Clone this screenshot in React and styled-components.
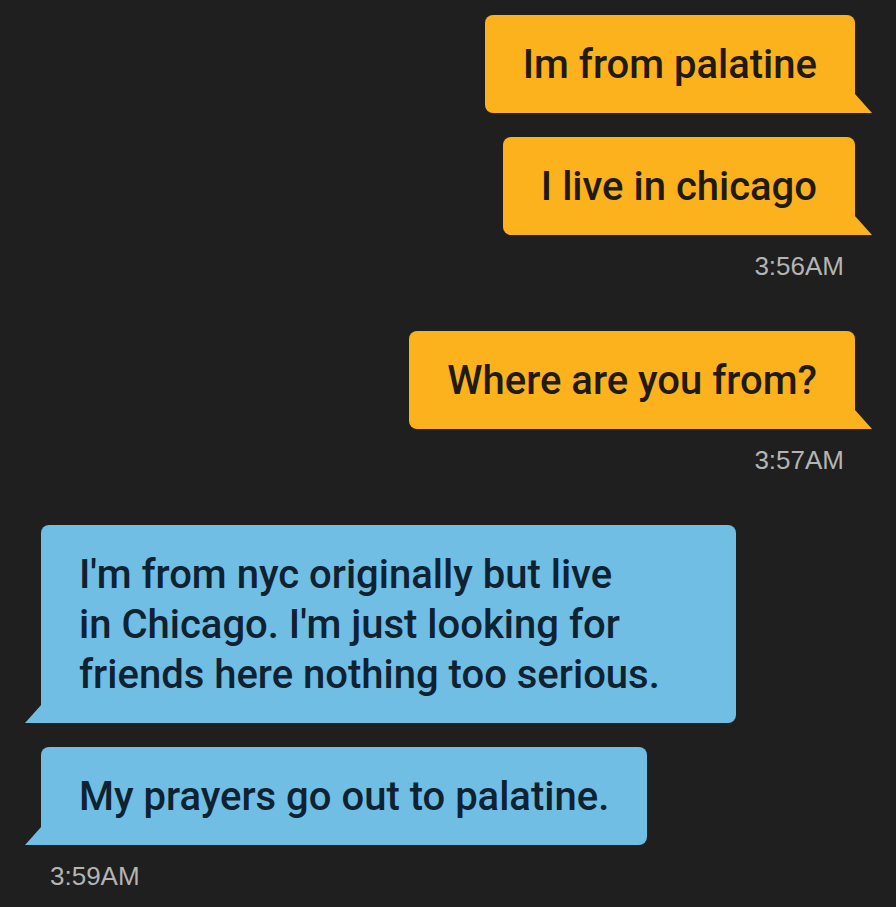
import React from "react";
import styled, { createGlobalStyle } from "styled-components";

const GlobalStyle = createGlobalStyle`
  html, body {
    margin: 0;
    padding: 0;
    background: #1f1f1f;
  }
  body {
    font-family: Roboto, "Liberation Sans", sans-serif;
  }
`

const Chat = styled.div`
  width: 896px;
  min-height: 907px;
  box-sizing: border-box;
  padding: 15px 41px 0;
  background: #1f1f1f;
  display: flex;
  flex-direction: column;
`

const Group = styled.div`
  display: flex;
  flex-direction: column;
  align-items: ${p => (p.$mine ? "flex-end" : "flex-start")};
  gap: 24px;
  margin-bottom: 49px;
`

const Bubble = styled.div`
  position: relative;
  box-sizing: border-box;
  width: ${p => p.$width || "auto"};
  padding: 25px 38px 23px;
  font-size: 40px;
  font-weight: 500;
  line-height: 50px;
  color: ${p => (p.$mine ? "#211a10" : "#0e2232")};
  background: ${p => (p.$mine ? "#fcb21c" : "#70bee3")};
  border-radius: ${p => (p.$mine ? "8px 8px 0 8px" : "8px 8px 8px 0")};

  &::after {
    content: '';
    position: absolute;
    bottom: 0;
    width: 17px;
    height: 19px;
    background: inherit;
    ${p => p.$mine
      ? "right: -17px; clip-path: polygon(0 0, 100% 100%, 0 100%);"
      : "left: -16px; clip-path: polygon(100% 0, 100% 100%, 0 100%);"}
  }
`

const Time = styled.div`
  margin-top: -9px;
  padding: 0 ${p => (p.$mine ? "11px" : "9px")};
  font-family: "Liberation Sans", Arial, sans-serif;
  font-size: 26px;
  line-height: 32px;
  color: #b4b4b4;
`

const messages = [
  {
    mine: true,
    time: "3:56AM",
    texts: ["Im from palatine", "I live in chicago"],
  },
  {
    mine: true,
    time: "3:57AM",
    texts: ["Where are you from?"],
  },
  {
    mine: false,
    time: "3:59AM",
    texts: [
      ["I'm from nyc originally but live", "in Chicago. I'm just looking for", "friends here nothing too serious."],
      "My prayers go out to palatine.",
    ],
  },
]

export default function App() {
  return (
    <>
      <GlobalStyle />
      <Chat>
        {messages.map((group, i) => (
          <Group key={i} $mine={group.mine}>
            {group.texts.map((text, j) => (
              <Bubble
                key={j}
                $mine={group.mine}
                $width={Array.isArray(text) ? "695px" : undefined}
              >
                {Array.isArray(text)
                  ? text.map((line, k) => <div key={k}>{line}</div>)
                  : text}
              </Bubble>
            ))}
            <Time $mine={group.mine}>{group.time}</Time>
          </Group>
        ))}
      </Chat>
    </>
  )
}
